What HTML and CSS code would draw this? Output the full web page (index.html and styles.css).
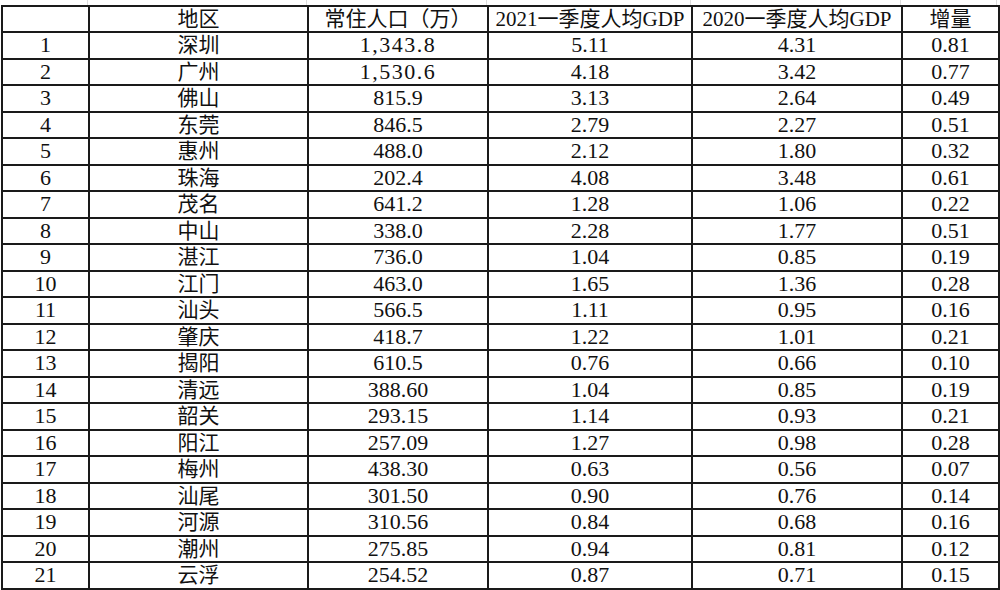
FILE: index.html
```html
<!DOCTYPE html>
<html lang="zh">
<head>
<meta charset="utf-8">
<title>广东各市一季度人均GDP</title>
<link rel="stylesheet" href="styles.css">
</head>
<body>
<div class="sheet">
  <div class="grid-strip top">
    <span></span><span></span><span></span><span></span><span></span><span></span>
  </div>
  <table class="data">
    <colgroup>
      <col class="c-idx"><col class="c-area"><col class="c-pop"><col class="c-g21"><col class="c-g20"><col class="c-inc">
    </colgroup>
    <thead>
      <tr><th></th><th>地区</th><th>常住人口（万）</th><th>2021一季度人均GDP</th><th>2020一季度人均GDP</th><th>增量</th></tr>
    </thead>
    <tbody>
      <tr><td>1</td><td class="area">深圳</td><td class="wide">1,343.8</td><td>5.11</td><td>4.31</td><td>0.81</td></tr>
      <tr><td>2</td><td class="area">广州</td><td class="wide">1,530.6</td><td>4.18</td><td>3.42</td><td>0.77</td></tr>
      <tr><td>3</td><td class="area">佛山</td><td>815.9</td><td>3.13</td><td>2.64</td><td>0.49</td></tr>
      <tr><td>4</td><td class="area">东莞</td><td>846.5</td><td>2.79</td><td>2.27</td><td>0.51</td></tr>
      <tr><td>5</td><td class="area">惠州</td><td>488.0</td><td>2.12</td><td>1.80</td><td>0.32</td></tr>
      <tr><td>6</td><td class="area">珠海</td><td>202.4</td><td>4.08</td><td>3.48</td><td>0.61</td></tr>
      <tr><td>7</td><td class="area">茂名</td><td>641.2</td><td>1.28</td><td>1.06</td><td>0.22</td></tr>
      <tr><td>8</td><td class="area">中山</td><td>338.0</td><td>2.28</td><td>1.77</td><td>0.51</td></tr>
      <tr><td>9</td><td class="area">湛江</td><td>736.0</td><td>1.04</td><td>0.85</td><td>0.19</td></tr>
      <tr><td>10</td><td class="area">江门</td><td>463.0</td><td>1.65</td><td>1.36</td><td>0.28</td></tr>
      <tr><td>11</td><td class="area">汕头</td><td>566.5</td><td>1.11</td><td>0.95</td><td>0.16</td></tr>
      <tr><td>12</td><td class="area">肇庆</td><td>418.7</td><td>1.22</td><td>1.01</td><td>0.21</td></tr>
      <tr><td>13</td><td class="area">揭阳</td><td>610.5</td><td>0.76</td><td>0.66</td><td>0.10</td></tr>
      <tr><td>14</td><td class="area">清远</td><td>388.60</td><td>1.04</td><td>0.85</td><td>0.19</td></tr>
      <tr><td>15</td><td class="area">韶关</td><td>293.15</td><td>1.14</td><td>0.93</td><td>0.21</td></tr>
      <tr><td>16</td><td class="area">阳江</td><td>257.09</td><td>1.27</td><td>0.98</td><td>0.28</td></tr>
      <tr><td>17</td><td class="area">梅州</td><td>438.30</td><td>0.63</td><td>0.56</td><td>0.07</td></tr>
      <tr><td>18</td><td class="area">汕尾</td><td>301.50</td><td>0.90</td><td>0.76</td><td>0.14</td></tr>
      <tr><td>19</td><td class="area">河源</td><td>310.56</td><td>0.84</td><td>0.68</td><td>0.16</td></tr>
      <tr><td>20</td><td class="area">潮州</td><td>275.85</td><td>0.94</td><td>0.81</td><td>0.12</td></tr>
      <tr><td>21</td><td class="area">云浮</td><td>254.52</td><td>0.87</td><td>0.71</td><td>0.15</td></tr>
    </tbody>
  </table>
  <div class="grid-strip bottom">
    <span></span><span></span><span></span><span></span><span></span><span></span>
  </div>
</div>
</body>
</html>
```
FILE: styles.css
```css
html, body {
  margin: 0;
  padding: 0;
  background: #ffffff;
}

.sheet {
  width: 1000px;
  height: 590px;
  overflow: hidden;
  padding-left: 1px;
  box-sizing: border-box;
}

.grid-strip {
  display: grid;
  grid-template-columns: 86px 219px 180px 204px 210px 96px;
  width: 995px;
  margin-left: 1px;
}

.grid-strip.top {
  height: 5px;
}

.grid-strip.bottom {
  height: 6px;
}

.grid-strip span {
  border-right: 1px solid #dcdcdc;
}

.data {
  border-collapse: collapse;
  table-layout: fixed;
  width: 997px;
  font-family: "Liberation Serif", "Noto Sans CJK SC", serif;
  font-size: 21px;
  color: #111111;
}

.c-idx { width: 87px; }
.c-area { width: 219px; }
.c-pop { width: 180px; }
.c-g21 { width: 204px; }
.c-g20 { width: 210px; }
.c-inc { width: 97px; }

.data th,
.data td {
  border: 2px solid #1a1a1a;
  padding: 0;
  text-align: center;
  vertical-align: middle;
  font-weight: normal;
  line-height: 22px;
  white-space: nowrap;
  overflow: hidden;
}

.data td {
  font-size: 22px;
}

.data td.area {
  font-size: 21px;
}

.data thead tr {
  height: 26px;
}

.data tbody tr {
  height: 26.5px;
}

.data td.wide {
  letter-spacing: 1.5px;
}
```
